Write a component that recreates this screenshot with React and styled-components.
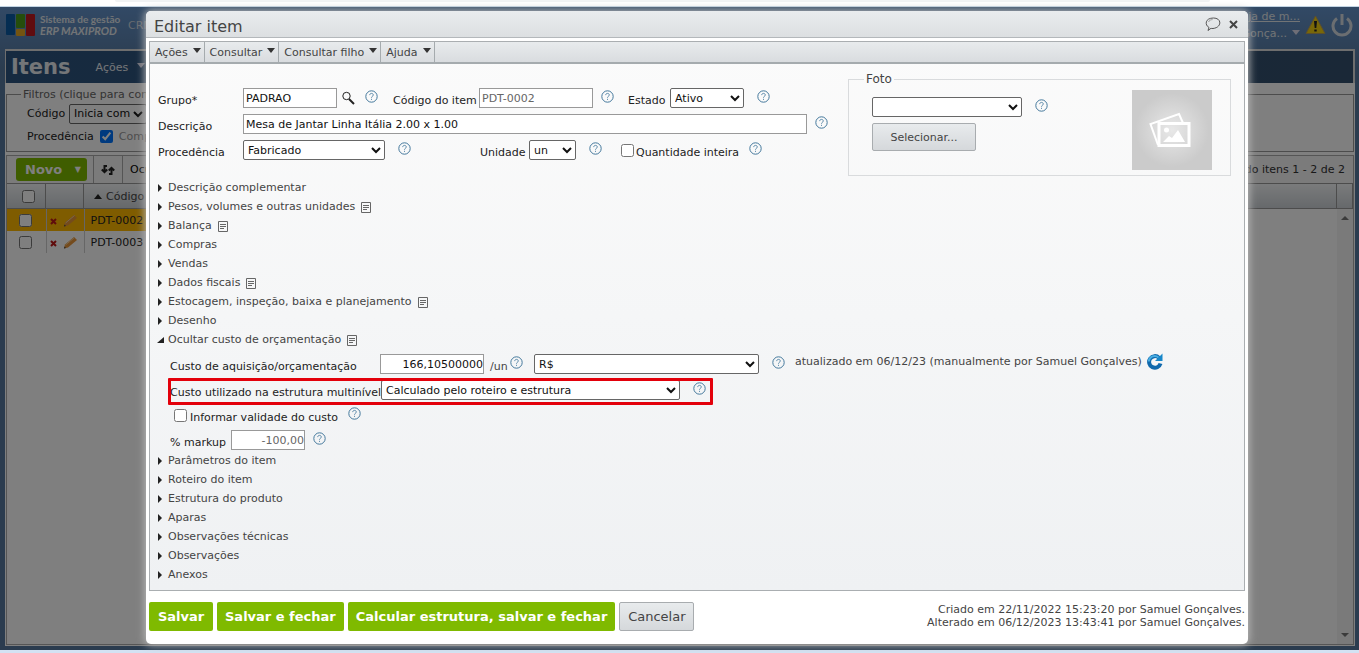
import React from 'react';
import styled, { createGlobalStyle } from 'styled-components';

const closedTop = [
    { title: 'Descrição complementar' },
    { title: 'Pesos, volumes e outras unidades', note: true },
    { title: 'Balança', note: true },
    { title: 'Compras' },
    { title: 'Vendas' },
    { title: 'Dados fiscais', note: true },
    { title: 'Estocagem, inspeção, baixa e planejamento', note: true },
    { title: 'Desenho' },
];

const closedBottom = [
    { title: 'Parâmetros do item' },
    { title: 'Roteiro do item' },
    { title: 'Estrutura do produto' },
    { title: 'Aparas' },
    { title: 'Observações técnicas' },
    { title: 'Observações' },
    { title: 'Anexos' },
];

const Help = () => (
    <HelpButton type='button' aria-label='Ajuda'>
        <svg width='13' height='13' viewBox='0 0 13 13' fill='none'>
            <circle cx='6.5' cy='6.5' r='5.7' stroke='#44789c' />
            <path
                d='M4.7 5.1c0-2.3 3.6-2.2 3.6-.1 0 1.3-1.8 1.3-1.8 2.7M6.5 8.8v1.1'
                stroke='#5a89a9'
            />
        </svg>
    </HelpButton>
);

const NoteIcon = () => (
    <svg width='10' height='11' viewBox='0 0 10 11' fill='none' stroke='#666'>
        <path d='M.5.5h9v10h-9zM2 3.5h6M2 5.5h6M2 7.5h4' />
    </svg>
);

const Section = ({ title, note, open }) => (
    <SectionButton type='button' aria-expanded={!!open}>
        <svg width='7' height='8' viewBox='0 0 7 8' fill='#222'>
            <path d={open ? 'M7 1v6H0z' : 'M1 0l4 4-4 4z'} />
        </svg>
        {title}
        {note && <NoteIcon />}
    </SectionButton>
);

function Backdrop() {
    return (
        <Page>
            <TopBar>
                <svg width='29' height='22' viewBox='0 0 29 22'>
                    <rect width='9' height='21' rx='1' fill='#0a5aa5' />
                    <rect x='10' width='9' height='14' rx='1' fill='#4a9a18' />
                    <rect x='10' y='15' width='9' height='7' rx='1' fill='#e8a820' />
                    <rect x='20' width='9' height='22' rx='1' fill='#c01820' />
                </svg>
                <Brand>
                    Sistema de gestão
                    <em>ERP MAXIPROD</em>
                </Brand>
                <TopLink href='#crm'>CRM</TopLink>
                <Account>
                    <a href='#empresa'>Loja de m...</a>
                    <span>
                        Samuel Gonça...
                        <Caret $light />
                    </span>
                </Account>
                <svg width='21' height='20' viewBox='0 0 21 20'>
                    <path d='M10.5 1L20 18.5H1z' fill='#f2d011' stroke='#b99e56' />
                    <path d='M9 6h3l-.7 7H9.7zM9.3 14.5h2.4v2H9.3z' fill='#222' />
                </svg>
                <svg width='22' height='23' viewBox='0 0 22 23' fill='none' stroke='#d6dce2' strokeWidth='3'>
                    <path d='M6 4.5a9 9 0 1 0 10 0M11 0v11' />
                </svg>
            </TopBar>
            <TitleBar>
                <h1>Itens</h1>
                <span>
                    Ações <Caret $light />
                </span>
            </TitleBar>
            <Sheet>
                <Filters>
                    <legend>Filtros (clique para contrair)</legend>
                    <FilterRow>
                        <label htmlFor='filtroCodigo'>Código</label>
                        <Select id='filtroCodigo' $w={78}>
                            <option>Inicia com</option>
                        </Select>
                    </FilterRow>
                    <FilterRow>
                        <span>Procedência</span>
                        <Check type='checkbox' id='comprado' defaultChecked />
                        <Muted htmlFor='comprado'>Comprado</Muted>
                    </FilterRow>
                </Filters>
                <Grid>
                    <Toolbar>
                        <NewButton type='button'>
                            Novo <i>▼</i>
                        </NewButton>
                        <Tool>
                            <svg width='14' height='12' viewBox='0 0 14 12' fill='none' stroke='#222' strokeWidth='2'>
                                <path d='M6 2H3.5v6M.8 5.5l2.7 2.7 2.700-2.700M8 10h2.500V4M7.800 6.500l2.700-2.700 2.700 2.700' />
                            </svg>
                        </Tool>
                        <Tool>Ocultar filtros</Tool>
                        <Count>Exibindo itens 1 - 2 de 2</Count>
                    </Toolbar>
                    <HeadStrip>
                        <HeadCell $w={39}>
                            <Check type='checkbox' aria-label='Todos' />
                        </HeadCell>
                        <HeadCell $w={38} />
                        <HeadCell $grow>
                            <svg width='8' height='5'>
                                <path d='M0 5l4-5 4 5z' fill='#222' />
                            </svg>
                            Código
                        </HeadCell>
                        <HeadCell $w={16} />
                    </HeadStrip>
                    <GridBody>
                        <Table>
                            <tbody>
                                {['PDT-0002', 'PDT-0003'].map((code, i) => (
                                    <Row key={code} $selected={i === 0}>
                                        <td>
                                            <Check type='checkbox' aria-label={code} />
                                        </td>
                                        <td>
                                            <svg width='28' height='13' viewBox='0 0 28 13'>
                                                <path d='M1 5l5 5M6 5l-5 5' stroke='#c01818' strokeWidth='2' />
                                                <path d='M14 12.500l1-4L24 1l3 3-9 7.500z' fill='#e8963a' />
                                                <path d='M15.500 9L24.500 1.500' stroke='#f5cf98' />
                                                <path d='M14 12.500l.5-2 1.500 1.500z' fill='#444' />
                                            </svg>
                                        </td>
                                        <td>{code}</td>
                                    </Row>
                                ))}
                            </tbody>
                        </Table>
                        <ScrollBar>
                            <svg width='8' height='4'>
                                <path d='M0 4l4-4 4 4z' fill='#777' />
                            </svg>
                            <svg width='8' height='4'>
                                <path d='M0 0l4 4 4-4z' fill='#777' />
                            </svg>
                        </ScrollBar>
                    </GridBody>
                </Grid>
            </Sheet>
        </Page>
    );
}

function ItemForm() {
    return (
        <FormTop>
            <Fields>
                <Line>
                    <Label htmlFor='grupo' $w={85}>Grupo*</Label>
                    <Input id='grupo' $w={94} defaultValue='PADRAO' />
                    <Gap $w={5} />
                    <svg width='13' height='14' viewBox='0 0 13 14' fill='none' stroke='#222'>
                        <circle cx='4.5' cy='5' r='3.7' />
                        <path d='M7 8l5 5' strokeWidth='2' />
                    </svg>
                    <Gap $w={10} />
                    <Help />
                    <Gap $w={15} />
                    <Label htmlFor='codigo' $w={86}>Código do item</Label>
                    <Input id='codigo' $w={114} $muted defaultValue='PDT-0002' />
                    <Gap $w={8} />
                    <Help />
                    <Gap $w={14} />
                    <Label htmlFor='estado' $w={42}>Estado</Label>
                    <Select id='estado' $w={74}>
                        <option>Ativo</option>
                    </Select>
                    <Gap $w={13} />
                    <Help />
                </Line>
                <Line>
                    <Label htmlFor='descricao' $w={85}>Descrição</Label>
                    <Input
                        id='descricao'
                        $w={564}
                        defaultValue='Mesa de Jantar Linha Itália 2.00 x 1.00'
                    />
                    <Gap $w={8} />
                    <Help />
                </Line>
                <Line>
                    <Label htmlFor='procedencia' $w={85}>Procedência</Label>
                    <Select id='procedencia' $w={142}>
                        <option>Fabricado</option>
                    </Select>
                    <Gap $w={13} />
                    <Help />
                    <Gap $w={69} />
                    <Label htmlFor='unidade' $w={49}>Unidade</Label>
                    <Select id='unidade' $w={47}>
                        <option>un</option>
                    </Select>
                    <Gap $w={13} />
                    <Help />
                    <Gap $w={19} />
                    <Check type='checkbox' id='inteira' />
                    <Gap $w={2} />
                    <Label htmlFor='inteira' $w={113}>Quantidade inteira</Label>
                    <Help />
                </Line>
            </Fields>
            <Photo>
                <legend>Foto</legend>
                <div>
                    <Line>
                        <Select $w={150} aria-label='Foto' />
                        <Gap $w={13} />
                        <Help />
                    </Line>
                    <GreyButton type='button' $wide>
                        Selecionar...
                    </GreyButton>
                </div>
                <Placeholder>
                    <svg width='42' height='36' viewBox='0 0 42 36' fill='none' stroke='#fff' strokeWidth='2'>
                        <path d='M9 33L1.500 12 30 2l4 9' />
                        <path d='M10 11.500h30v22H10z' strokeWidth='3' />
                        <circle cx='17.500' cy='18' r='2.500' fill='#fff' stroke='none' />
                        <path d='M14 30l6-6 3 2 6-8 7 12z' fill='#fff' stroke='none' />
                    </svg>
                </Placeholder>
            </Photo>
        </FormTop>
    );
}

function CostForm() {
    return (
        <Cost>
            <Line>
                <Label htmlFor='custo' $w={210}>Custo de aquisição/orçamentação</Label>
                <Input id='custo' $w={104} $right defaultValue='166,10500000' />
                <Gap $w={6} />
                <Label as='span' $w={20} $soft>/un</Label>
                <Help />
                <Gap $w={11} />
                <Select $w={225} aria-label='Moeda'>
                    <option>R$</option>
                </Select>
                <Gap $w={13} />
                <Help />
                <Gap $w={10} />
                <Updated>
                    atualizado em 06/12/23 (manualmente por Samuel Gonçalves)
                    <svg width='17' height='17' viewBox='0 0 17 17' fill='none'>
                        <path
                            d='M13 4.800A5.800 5.800 0 1 0 14.500 10.500'
                            stroke='#0f69ad'
                            strokeWidth='4'
                        />
                        <path d='M16.500.5V8H9z' fill='#1787c9' />
                        <path d='M12.500 4.500A5.800 5.800 0 0 0 2.800 8.500' stroke='#49aee2' strokeWidth='2' />
                    </svg>
                </Updated>
            </Line>
            <Highlighted>
                <Label htmlFor='multinivel' $w={211}>Custo utilizado na estrutura multinível</Label>
                <Select id='multinivel' $w={299}>
                    <option>Calculado pelo roteiro e estrutura</option>
                </Select>
                <Gap $w={13} />
                <Help />
            </Highlighted>
            <Line $short>
                <Gap $w={4} />
                <Check type='checkbox' id='validade' />
                <Gap $w={3} />
                <Label htmlFor='validade' $w={158}>Informar validade do custo</Label>
                <Help />
            </Line>
            <Line>
                <Label htmlFor='markup' $w={61}>% markup</Label>
                <Input id='markup' $w={74} $right $muted defaultValue='-100,00' />
                <Gap $w={8} />
                <Help />
            </Line>
        </Cost>
    );
}

export default function App() {
    return (
        <>
            <GlobalStyle />
            <BrowserEdge />
            <Backdrop />
            <Overlay>
                <Modal role='dialog' aria-label='Editar item'>
                    <ModalTitle>
                        <h2>Editar item</h2>
                        <IconButton type='button' aria-label='Comentários'>
                            <svg width='17' height='15' viewBox='0 0 17 15' fill='none' stroke='#555'>
                                <path d='M4 10.500C-.5 8 0 1 8.500 1S17 10.500 8 11.500c-1 0-1.500 0-2-.2L3 13.500z' />
                                <path d='M3.500 5c1-2 2.500-2.300 4-2.400' stroke='#999' />
                            </svg>
                        </IconButton>
                        <IconButton type='button' aria-label='Fechar'>
                            <svg width='9' height='9' viewBox='0 0 9 9' stroke='#444' strokeWidth='2'>
                                <path d='M1 1l7 7M8 1L1 8' />
                            </svg>
                        </IconButton>
                    </ModalTitle>
                    <Body>
                        <Menu>
                            {['Ações', 'Consultar', 'Consultar filho', 'Ajuda'].map((name) => (
                                <button type='button' key={name}>
                                    {name}
                                    <Caret />
                                </button>
                            ))}
                        </Menu>
                        <ItemForm />
                        {closedTop.map((s) => (
                            <Section key={s.title} {...s} />
                        ))}
                        <Section title='Ocultar custo de orçamentação' note open />
                        <CostForm />
                        {closedBottom.map((s) => (
                            <Section key={s.title} {...s} />
                        ))}
                    </Body>
                    <Footer>
                        <GreenButton type='button'>Salvar</GreenButton>
                        <GreenButton type='button'>Salvar e fechar</GreenButton>
                        <GreenButton type='button'>Calcular estrutura, salvar e fechar</GreenButton>
                        <GreyButton type='button'>Cancelar</GreyButton>
                        <Stamp>
                            Criado em 22/11/2022 15:23:20 por Samuel Gonçalves.
                            <br />
                            Alterado em 06/12/2023 13:43:41 por Samuel Gonçalves.
                        </Stamp>
                    </Footer>
                </Modal>
            </Overlay>
        </>
    );
}

const GlobalStyle = createGlobalStyle`
    * {
        box-sizing: border-box;
    }
    html,
    body,
    #root {
        height: 100%;
    }
    body {
        margin: 0;
        background: #d3e2f3;
        overflow: hidden;
    }
    body,
    button,
    input,
    select {
        font-family: Verdana, 'DejaVu Sans', sans-serif;
        font-size: 11px;
    }
    #root {
        display: flex;
        flex-direction: column;
        position: relative;
    }
    svg {
        flex: none;
    }
`;

const BrowserEdge = styled.div`
    height: 7px;
    flex: none;
    background: #fff;
    border-bottom: 1px solid #c3d5e4;

    &::before {
        content: '';
        display: block;
        height: 2px;
        margin: 0 149px 0 115px;
        background: #f1f3f4;
        border-radius: 0 0 8px 8px;
    }
`;

const Page = styled.div`
    flex: 1;
    min-height: 0;
    margin-bottom: 3px;
    padding: 0 4px 4px 5px;
    display: flex;
    flex-direction: column;
    background: linear-gradient(#6493cb, #57799f 60px, #57799f);
`;

const TopBar = styled.header`
    height: 42px;
    flex: none;
    display: flex;
    align-items: center;
    padding: 0 2px 6px 1px;
    color: #e4e8ec;
    gap: 5px;
`;

const Brand = styled.div`
    width: 83px;
    font: bold 10px/12px Lato, sans-serif;
    white-space: nowrap;

    em {
        display: block;
        font-size: 11px;
    }
`;

const TopLink = styled.a`
    color: #cdd5de;
    text-decoration: none;
`;

const Account = styled.div`
    margin-left: auto;
    width: 100px;
    text-align: right;
    line-height: 17px;
    white-space: nowrap;

    a {
        color: inherit;
    }
    span {
        display: flex;
        justify-content: flex-end;
    }
`;

const Caret = styled.i`
    flex: none;
    display: inline-block;
    align-self: center;
    margin-left: 5px;
    margin-bottom: 3px;
    border: solid transparent;
    border-width: 5px 4px 0;
    border-top-color: ${(p) => (p.$light ? '#dde' : '#333')};
`;

const TitleBar = styled.div`
    height: 34px;
    flex: none;
    display: flex;
    align-items: center;
    gap: 25px;
    padding-left: 5px;
    border: 1px solid #ddd;
    border-width: 2px 2px 0 1px;
    background: linear-gradient(90deg, #2d5580, #34506e);
    color: #e8ecf0;

    h1 {
        margin: 0;
        font-size: 21px;
    }
    span {
        white-space: nowrap;
    }
`;

const Sheet = styled.main`
    flex: 1;
    min-height: 0;
    display: flex;
    flex-direction: column;
    background: #fff;
    padding: 5px 1px 1px;
`;

const Filters = styled.fieldset`
    margin: 0 0 3px;
    height: 64px;
    flex: none;
    padding: 1px 6px;
    border: 1px solid #999;
    color: #222;

    legend {
        margin-left: 8px;
        padding: 0 2px;
        max-width: 125px;
        overflow: hidden;
        color: #666;
        white-space: nowrap;
    }
`;

const FilterRow = styled.div`
    height: 23px;
    display: flex;
    align-items: center;
    gap: 6px;
    padding-left: 14px;

    label:first-child {
        width: 36px;
    }
`;

const Muted = styled.label`
    color: #999;
`;

const Grid = styled.section`
    flex: 1;
    min-height: 0;
    display: flex;
    flex-direction: column;
    border: 1px solid #aaa;
`;

const Toolbar = styled.div`
    height: 27px;
    flex: none;
    display: flex;
    padding: 0 8px 0 9px;
    background: #f6f6f6;
`;

const NewButton = styled.button`
    width: 71px;
    height: 23px;
    margin: 2px 6px 0 0;
    padding: 0 6px 0 9px;
    border: 0;
    border-radius: 3px;
    background: #7fba00;
    color: #fff;
    font-size: 13px;
    font-weight: bold;
    display: flex;
    justify-content: space-between;
    align-items: center;

    i {
        font-size: 8px;
        font-style: normal;
    }
`;

const Tool = styled.span`
    display: flex;
    align-items: center;
    padding: 0 7px 0 7px;
    border-left: 1px solid #aaa;
    white-space: nowrap;
`;

const Count = styled.span`
    margin-left: auto;
    align-self: center;
    color: #333;
`;

const HeadStrip = styled.div`
    height: 26px;
    flex: none;
    display: flex;
    border: solid #999;
    border-width: 1px 0;
    background: linear-gradient(#f4f6f8, #cdd2d7);
`;

const HeadCell = styled.div`
    width: ${(p) => p.$w}px;
    flex: ${(p) => (p.$grow ? 1 : 'none')};
    display: flex;
    align-items: center;
    justify-content: ${(p) => (p.$grow ? 'flex-start' : 'center')};
    gap: 4px;
    padding: ${(p) => (p.$grow ? '0 10px' : '0 0 0 5px')};
    border-right: 1px solid #999;
    color: #444;
`;

const GridBody = styled.div`
    flex: 1;
    display: flex;
    justify-content: space-between;
    align-items: flex-start;
    background: #fff;
`;

const Table = styled.table`
    width: 70%;
    border-collapse: collapse;
    table-layout: fixed;

    td {
        height: 22px;
        padding: 0 0 0 6px;
        border-right: 1px solid #ccc;
        vertical-align: middle;
    }
    td:nth-child(1) {
        width: 39px;
        padding-left: 12px;
    }
    td:nth-child(2) {
        width: 38px;
        padding-left: 3px;
    }
    svg,
    input {
        display: block;
    }
`;

const Row = styled.tr`
    background: ${(p) => (p.$selected ? '#ffb800' : '#fff')};
    color: #222;
`;

const ScrollBar = styled.div`
    align-self: stretch;
    width: 16px;
    padding: 7px 0;
    display: flex;
    flex-direction: column;
    justify-content: space-between;
    align-items: center;
    background: #f4f4f4;
`;

/* modal layer sits above the dimmed page */
const Overlay = styled.div`
    position: absolute;
    inset: 7px 0 3px;
    padding: 4px 111px 6px 146px;
    display: flex;
    background: rgba(0, 0, 0, 0.5);
`;

const Modal = styled.div`
    flex: 1;
    min-width: 0;
    display: flex;
    flex-direction: column;
    background: #fff;
    border-radius: 5px;
    box-shadow: 0 0 8px 1px #bbb;
    color: #444;
`;

const ModalTitle = styled.div`
    height: 27px;
    flex: none;
    display: flex;
    align-items: center;
    gap: 7px;
    padding: 0 10px 0 8px;
    border-bottom: 1px solid #b4b8bb;
    border-radius: 5px 5px 0 0;
    background: linear-gradient(#e9ecee, #dcdfe1);

    h2 {
        flex: 1;
        margin: 4px 0 0;
        font-size: 16px;
        font-weight: normal;
    }
`;

const IconButton = styled.button`
    padding: 0;
    border: 0;
    background: none;
    display: flex;
`;

const Body = styled.div`
    flex: 1;
    min-height: 0;
    margin: 3px 3px 0;
    border: 1px solid #aaaeb1;
    background: linear-gradient(#fbfbfb, #eff1f3);
`;

const Menu = styled.div`
    height: 22px;
    display: flex;
    border-bottom: 2px solid #a5abae;
    background: linear-gradient(#e8ebed, #d9dcdf);

    button {
        display: flex;
        align-items: center;
        padding: 0 3px 0 5px;
        border: 0;
        border-right: 1px solid #a5abae;
        background: none;
        color: #444;
    }
`;

const FormTop = styled.div`
    height: 114px;
    display: flex;
    justify-content: space-between;
    padding: 8px 13px 0 8px;
`;

const Fields = styled.div`
    padding-top: 16px;
    display: flex;
    flex-direction: column;
    gap: 6px;
`;

const Line = styled.div`
    height: ${(p) => (p.$short ? 18 : 20)}px;
    display: flex;
    align-items: center;
`;

const Gap = styled.span`
    flex: none;
    width: ${(p) => p.$w}px;
`;

const Label = styled.label`
    flex: none;
    width: ${(p) => p.$w}px;
    padding-top: 4px;
    color: ${(p) => (p.$soft ? '#444' : '#222')};
    white-space: nowrap;
`;

const Input = styled.input`
    flex: none;
    width: ${(p) => p.$w}px;
    height: 20px;
    padding: 1px ${(p) => (p.$right ? 0 : 2)}px;
    border: 1px solid #999;
    background: #fff;
    color: ${(p) => (p.$muted ? '#666' : '#111')};
    text-align: ${(p) => (p.$right ? 'right' : 'left')};
`;

const Select = styled.select`
    flex: none;
    width: ${(p) => p.$w}px;
    height: 20px;
    border: 1px solid #666;
    border-radius: 2px;
    background: #fff;
    color: #111;
`;

const Check = styled.input`
    flex: none;
    width: 13px;
    height: 13px;
    margin: 0;
`;

const HelpButton = styled.button`
    flex: none;
    padding: 0;
    margin-bottom: 4px;
    border: 0;
    background: none;
    display: flex;
`;

const Photo = styled.fieldset`
    width: 383px;
    height: 104px;
    margin: 0;
    padding: 4px 18px 0 23px;
    display: flex;
    justify-content: space-between;
    border: 1px solid #d9dbdd;

    legend {
        margin-left: -8px;
        padding: 0 2px;
        font-size: 12px;
    }
    > div:first-of-type {
        padding-top: 7px;
    }
`;

const Placeholder = styled.div`
    width: 80px;
    height: 80px;
    padding-right: 4px;
    display: flex;
    align-items: center;
    justify-content: center;
    background: radial-gradient(circle, #e8e8e8, #cbcbcb 65%);
`;

const GreyButton = styled.button`
    height: ${(p) => (p.$wide ? 28 : 29)}px;
    width: ${(p) => (p.$wide ? 104 : 75)}px;
    margin-top: ${(p) => (p.$wide ? 6 : 0)}px;
    padding: 0;
    border: 1px solid #a8acaf;
    border-radius: 2px;
    background: linear-gradient(#e8ebed, #d5d8db);
    color: #444;
    font-size: ${(p) => (p.$wide ? 11 : 13)}px;
`;

const SectionButton = styled.button`
    height: 19px;
    padding: 0 0 0 7px;
    display: flex;
    align-items: center;
    gap: 4px;
    border: 0;
    background: none;
    color: #444;

    svg:last-child:not(:first-child) {
        margin: 2px 0 0 2px;
    }
`;

const Cost = styled.div`
    padding: 5px 0 1px 20px;
    display: flex;
    flex-direction: column;
    gap: 6px;
`;

const Highlighted = styled(Line)`
    position: relative;
    width: 540px;

    &::after {
        content: '';
        position: absolute;
        inset: -2px -3px -5px -2px;
        border: 3px solid #e3000b;
        border-radius: 1px;
        pointer-events: none;
    }
`;

const Updated = styled.span`
    display: flex;
    align-items: center;
    gap: 4px;
    white-space: nowrap;
    padding-bottom: 5px;
`;

const Footer = styled.footer`
    height: 53px;
    flex: none;
    display: flex;
    align-items: flex-start;
    gap: 4px;
    padding: 11px 3px 0;
`;

const GreenButton = styled.button`
    height: 29px;
    min-width: 64px;
    padding: 0 8px;
    border: 0;
    border-radius: 2px;
    background: #7fba00;
    color: #fff;
    font-size: 13px;
    font-weight: bold;
    white-space: nowrap;
`;

const Stamp = styled.p`
    margin: 1px 0 0 auto;
    line-height: 13px;
    text-align: right;
    white-space: nowrap;
`;
